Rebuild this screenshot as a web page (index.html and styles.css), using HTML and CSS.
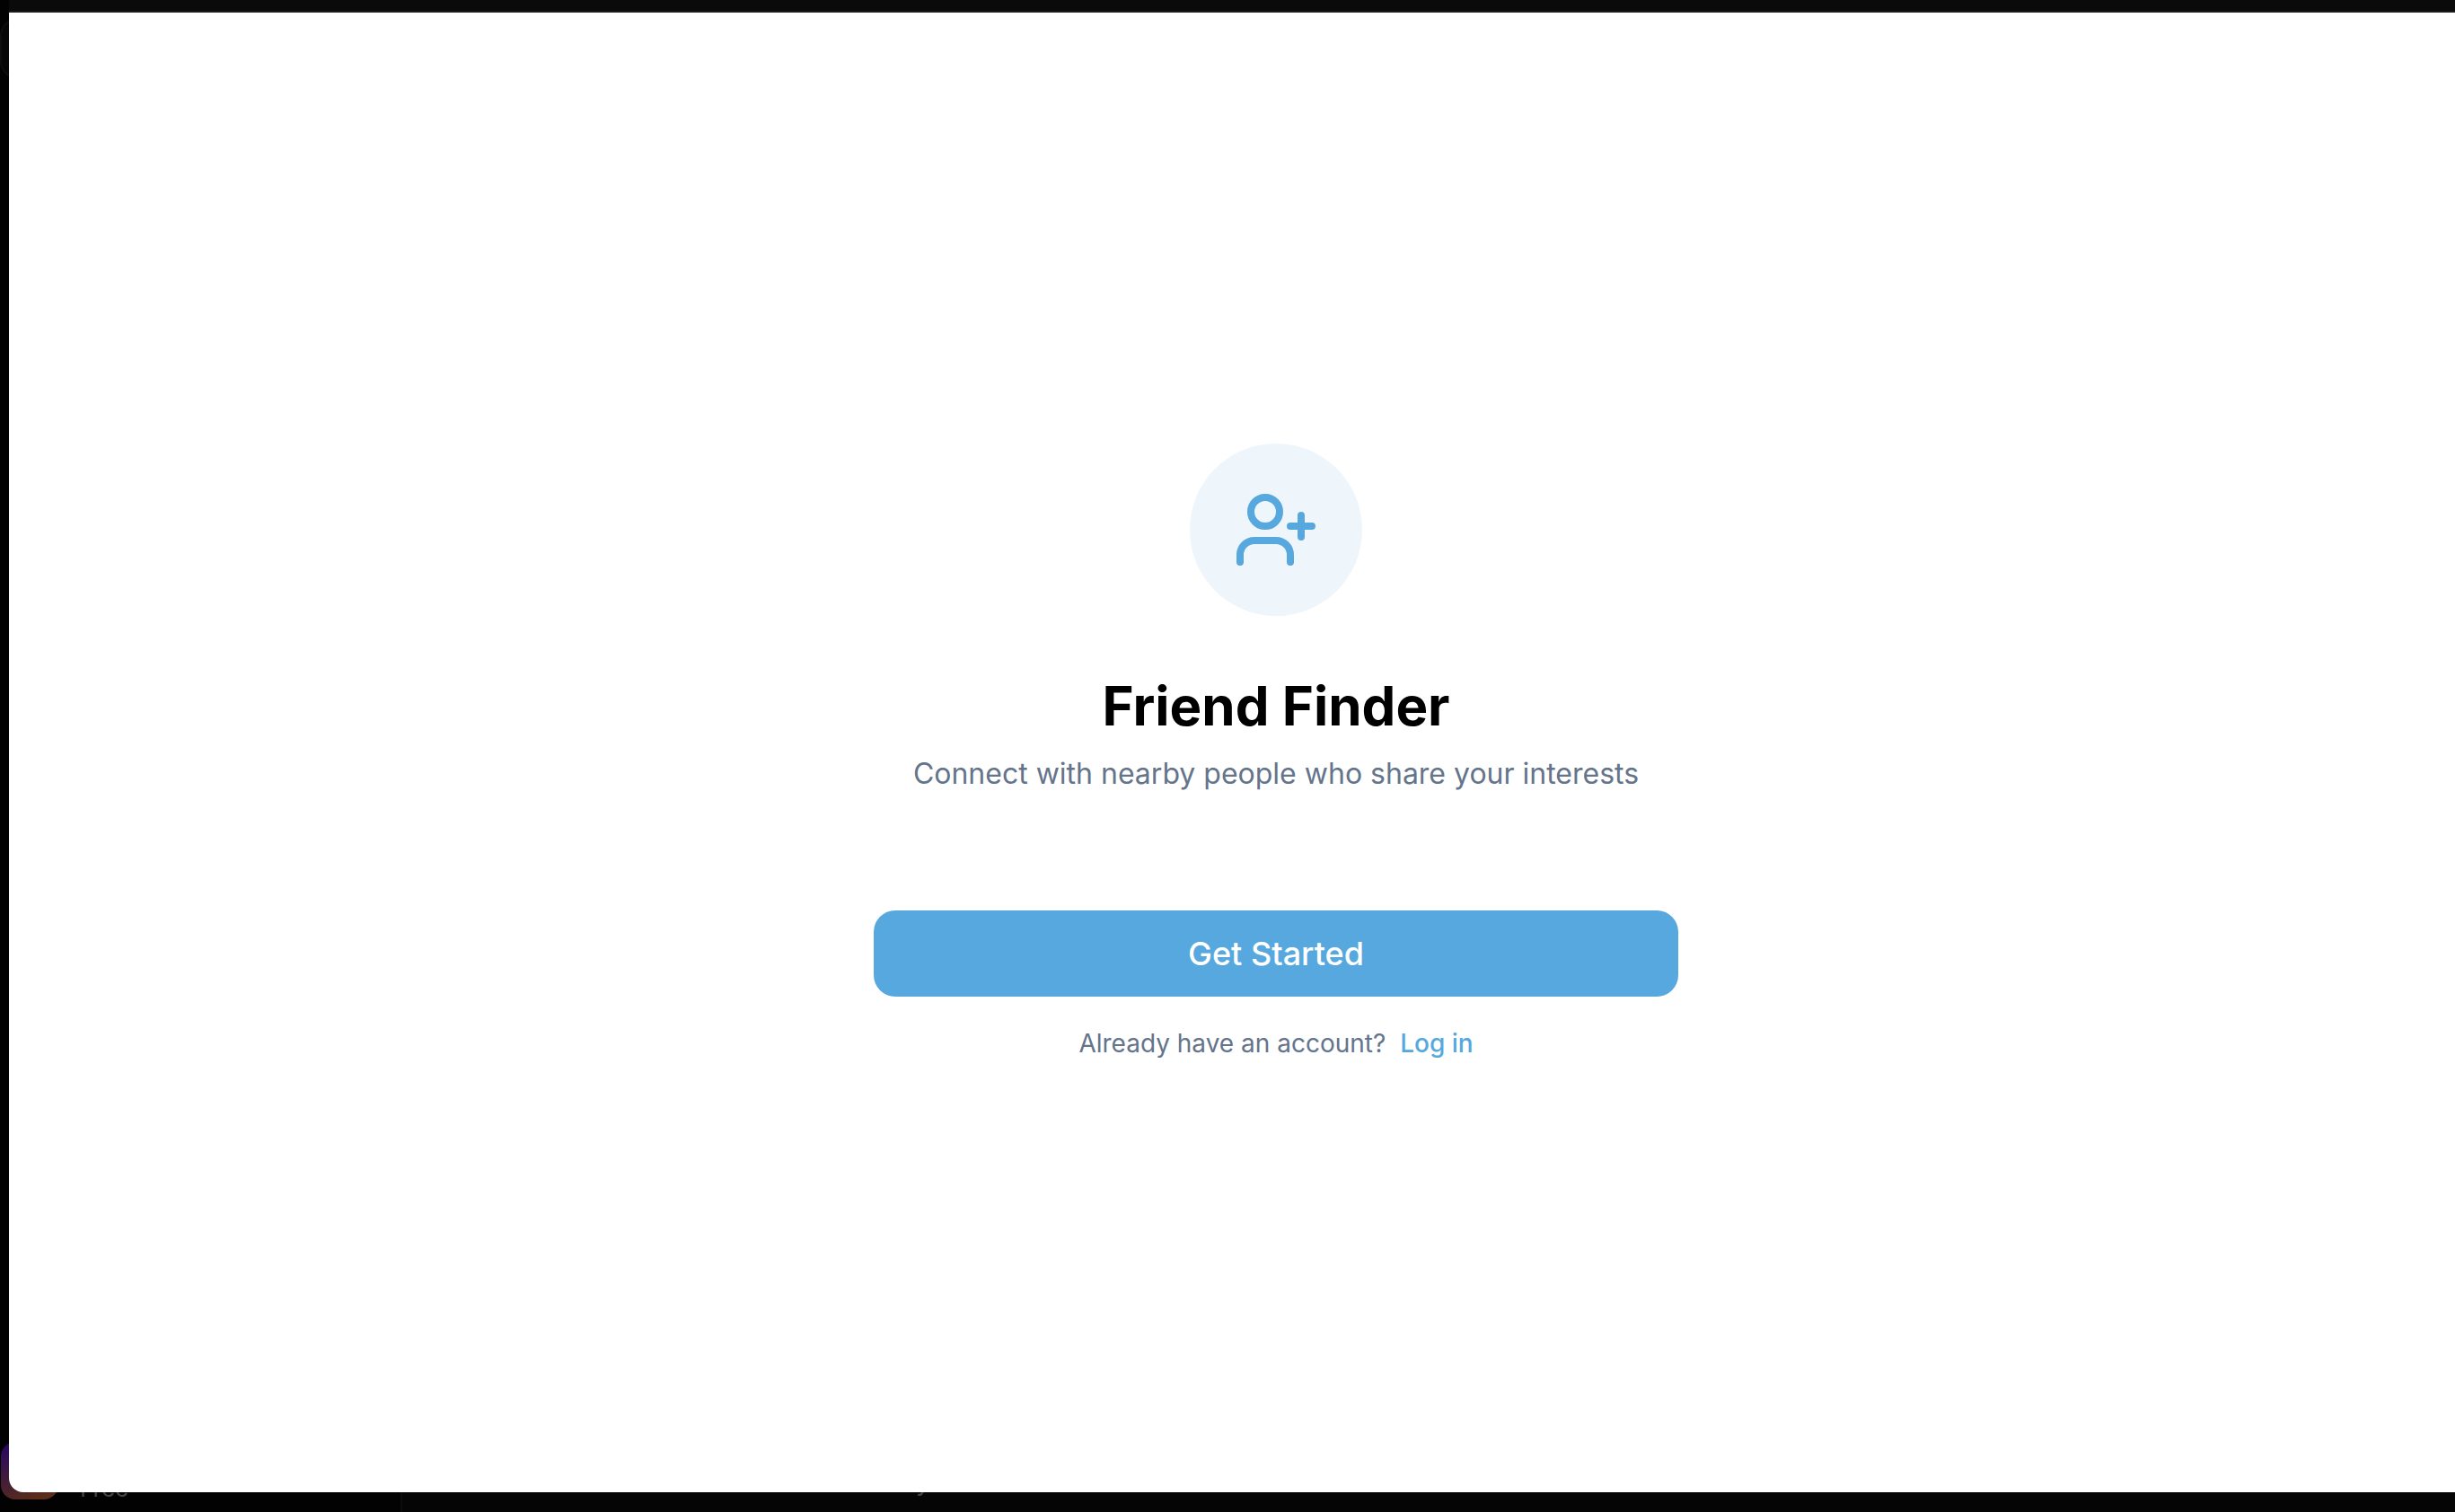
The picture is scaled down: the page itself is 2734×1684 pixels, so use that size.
FILE: index.html
```html
<!DOCTYPE html>
<html lang="en">
<head>
<meta charset="utf-8">
<meta name="viewport" content="width=device-width, initial-scale=1">
<title>Friend Finder</title>
<link rel="stylesheet" href="styles.css">
</head>
<body>
<div class="backdrop">
  <aside class="sidebar">
    <div class="panel"></div>
    <div class="account">
      <span class="avatar"></span>
      <span class="plan">Free</span>
    </div>
  </aside>
  <div class="workspace"><p class="message">y</p></div>
</div>
<div class="modal">
  <div class="toolbar"></div>
  <main class="screen">
    <div class="badge">
      <svg class="badge-icon" viewBox="0 0 24 24" fill="none" stroke="currentColor" stroke-width="2" stroke-linecap="round" stroke-linejoin="round" aria-hidden="true">
        <path d="M16 21v-2a4 4 0 0 0-4-4H6a4 4 0 0 0-4 4v2"/>
        <circle cx="9" cy="7" r="4"/>
        <path d="M19 8v6M22 11h-6"/>
      </svg>
    </div>
    <h1 class="title">Friend Finder</h1>
    <p class="subtitle">Connect with nearby people who share your interests</p>
    <button class="start" type="button">Get Started</button>
    <p class="login">Already have an account? <a class="login-link" href="#login">Log in</a></p>
  </main>
</div>
</body>
</html>
```
FILE: styles.css
```css
* {
  box-sizing: border-box;
}

body {
  margin: 0;
  height: 100vh;
  overflow: hidden;
  background: #050505;
  font-family: Inter, "Liberation Sans", sans-serif;
}

h1,
p {
  margin: 0;
}

/* Dimmed app behind the dialog */
.backdrop {
  display: flex;
  height: 100%;
}

.sidebar {
  display: flex;
  flex-direction: column;
  justify-content: space-between;
  width: 448px;
  padding: 20px 0 14px;
  border-right: 2px solid #0b0b0b;
  background: #020202;
}

.panel {
  height: 68px;
  border: 2px solid #0e0e0e;
  border-radius: 20px;
  background: #060606;
}

.account {
  display: flex;
  align-items: flex-end;
  gap: 24px;
  padding-left: 1px;
}

.avatar {
  width: 64px;
  height: 64px;
  border-radius: 16px;
  background: linear-gradient(160deg, #2b0a5c 10%, #5a2e18 90%);
}

.plan {
  font-size: 26px;
  line-height: 24px;
  color: #444;
}

.workspace {
  display: flex;
  flex: 1;
  align-items: flex-end;
  padding: 0 572px 18px;
}

.message {
  font-size: 28px;
  line-height: 32px;
  color: #444;
}

/* Dialog, wider than the window on the right */
.modal {
  position: absolute;
  top: 0;
  bottom: 22px;
  left: 10px;
  display: flex;
  flex-direction: column;
  width: calc(100% + 88px);
  overflow: hidden;
  border-radius: 0 0 16px 16px;
  background: #fff;
}

.toolbar {
  height: 14px;
  border-bottom: 2px solid #1b1b1b;
  background: #0a0a0a;
}

.screen {
  display: flex;
  flex: 1;
  flex-direction: column;
  align-items: center;
  justify-content: center;
}

.badge {
  display: grid;
  place-items: center;
  width: 192px;
  height: 192px;
  margin-bottom: 64px;
  border-radius: 50%;
  background: #eef5fb;
  color: #56a8de;
}

.badge-icon {
  width: 96px;
  height: 96px;
}

.title {
  margin-bottom: 16px;
  font-size: 60px;
  font-weight: 700;
  line-height: 72px;
  color: #000;
}

.subtitle {
  margin-bottom: 128px;
  font-size: 32px;
  line-height: 48px;
  color: #64748b;
}

.start {
  width: 100%;
  max-width: 896px;
  height: 96px;
  margin-bottom: 32px;
  border: 0;
  border-radius: 24px;
  background: #56a8de;
  font-family: inherit;
  font-size: 36px;
  font-weight: 500;
  color: #fff;
}

.login {
  font-size: 28px;
  line-height: 40px;
  color: #64748b;
}

.login-link {
  margin-left: 8px;
  font-weight: 500;
  color: #56a8de;
  text-decoration: none;
}
```
